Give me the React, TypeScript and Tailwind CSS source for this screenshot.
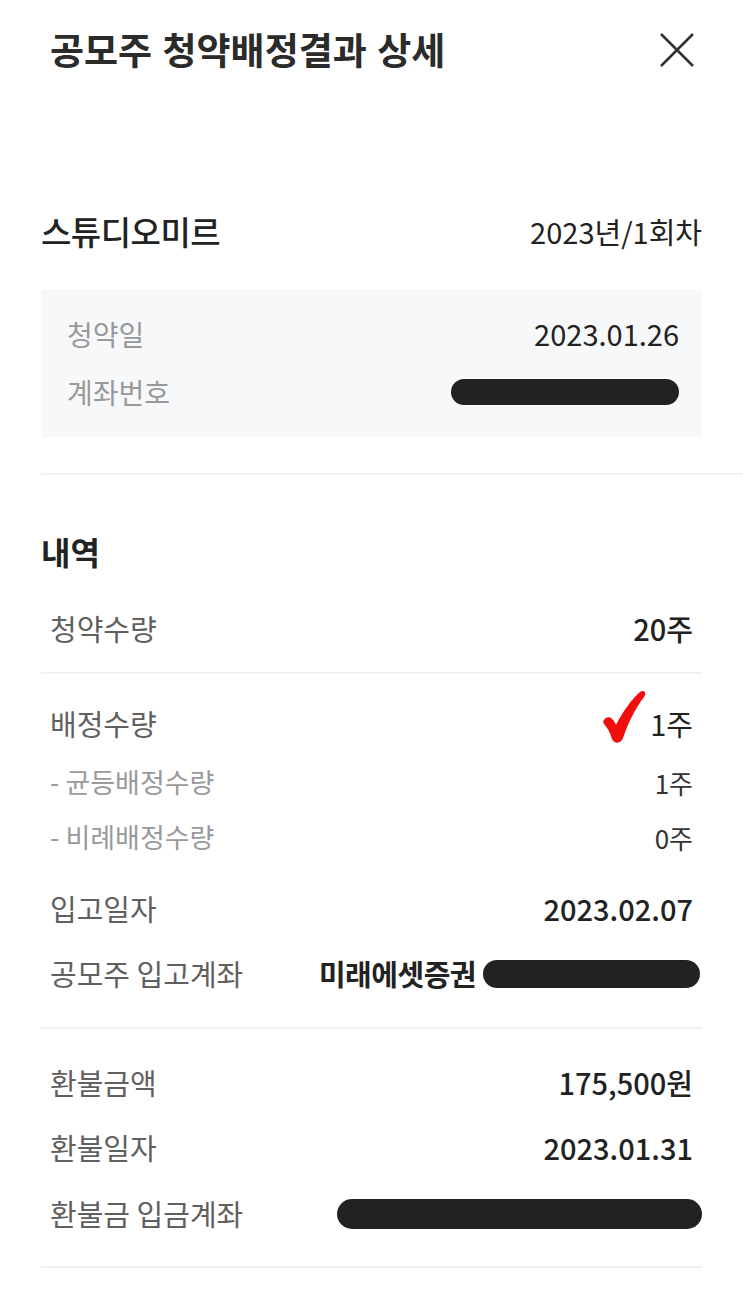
import React from "react";

const font = "font-['Noto_Sans_CJK_KR','Noto_Sans',sans-serif]";

function Row({ label, value, h, sub, bold }: { label: string; value: React.ReactNode; h: string; sub?: boolean; bold?: boolean }) {
    return (
        <div className={`flex items-center justify-between px-[9px] ${h}`}>
            <span className={sub ? "text-[27px] text-[#9a9a9a]" : "text-[29px] text-[#606060]"}>{label}</span>
            <span className={sub ? "text-[26px] text-[#333]" : bold ? "text-[29px] font-medium text-[#222]" : "text-[29px] text-[#222]"}>{value}</span>
        </div>
    );
}

function Bar({ w }: { w: string }) {
    return <div className={`h-[26px] rounded-full bg-[#222] ${w}`} />;
}

export default function App() {
    return (
        <div className={`w-[743px] h-[1289px] bg-white overflow-hidden ${font}`}>
            <div className="flex items-center justify-between h-[100px] pl-[50px] pr-[48px]">
                <span className="text-[37px] font-bold text-[#2b2b2b] [word-spacing:2px]">공모주 청약배정결과 상세</span>
                <svg width="36" height="36" viewBox="0 0 36 36">
                    <path d="M2 2 L34 34 M34 2 L2 34" stroke="#333" strokeWidth="2.6" fill="none" />
                </svg>
            </div>

            <div className="px-[41px]">
                <div className="flex items-center justify-between h-[60px] mt-[102px]">
                    <span className="text-[33px] font-medium text-[#222] tracking-[-0.5px]">스튜디오미르</span>
                    <span className="text-[29px] text-[#222]">2023년/1회차</span>
                </div>
                <div className="bg-[#f7f8fa] mt-[27px] py-[16px] px-[26px] pr-[23px]">
                    <div className="flex items-center justify-between h-[58px]">
                        <span className="text-[28px] text-[#999]">청약일</span>
                        <span className="text-[29px] text-[#222]">2023.01.26</span>
                    </div>
                    <div className="flex items-center justify-between h-[58px]">
                        <span className="text-[28px] text-[#999]">계좌번호</span>
                        <Bar w="w-[228px]" />
                    </div>
                </div>
            </div>

            <div className="ml-[41px] mt-[36px] h-[2px] bg-[#f2f2f2]" />

            <div className="px-[41px]">
                <div className="flex items-center h-[60px] mt-[46px]">
                    <span className="text-[32px] font-bold text-[#222]">내역</span>
                </div>
                <div className="mt-[18px]">
                    <Row label="청약수량" value="20주" h="h-[60px]" bold />
                </div>
                <div className="mt-[13px] h-[2px] bg-[#f2f2f2]" />
                <div className="mt-[20px]">
                    <Row
                        label="배정수량"
                        h="h-[60px]"
                        value={
                            <span className="flex items-center gap-[2px]">
                                <svg width="46" height="56" viewBox="0 0 46 56" className="-mt-[14px]">
                                    <path d="M2 31 C 5 26, 11 28, 14 36 C 21 22, 30 10, 38 3 C 42 0, 45 4, 42 8 C 33 20, 26 34, 21 49 C 19 55, 12 55, 10 50 C 8 43, 5 38, 2 35 C 1 33, 1 32, 2 31 Z" fill="#f20d0d" />
                                </svg>
                                <span>1주</span>
                            </span>
                        }
                    />
                    <Row label="- 균등배정수량" value="1주" h="h-[56px]" sub />
                    <Row label="- 비례배정수량" value="0주" h="h-[54px]" sub />
                    <div className="mt-[12px]">
                        <Row label="입고일자" value="2023.02.07" h="h-[66px]" bold />
                    </div>
                    <Row
                        label="공모주 입고계좌"
                        h="h-[64px]"
                        value={
                            <span className="flex items-center gap-[7px] -mr-[7px]">
                                <span className="font-bold text-[29px] tracking-[-0.5px]">미래에셋증권</span>
                                <Bar w="w-[217px] h-[28px]" />
                            </span>
                        }
                    />
                </div>
                <div className="mt-[21px] h-[2px] bg-[#f2f2f2]" />
                <div className="mt-[22px]">
                    <Row label="환불금액" value="175,500원" h="h-[64px]" bold />
                    <Row label="환불일자" value="2023.01.31" h="h-[66px]" bold />
                    <Row
                        label="환불금 입금계좌"
                        h="h-[66px]"
                        value={<span className="flex -mr-[9px]"><Bar w="w-[365px] h-[30px]" /></span>}
                    />
                </div>
                <div className="mt-[19px] h-[2px] bg-[#f2f2f2]" />
            </div>
        </div>
    );
}
